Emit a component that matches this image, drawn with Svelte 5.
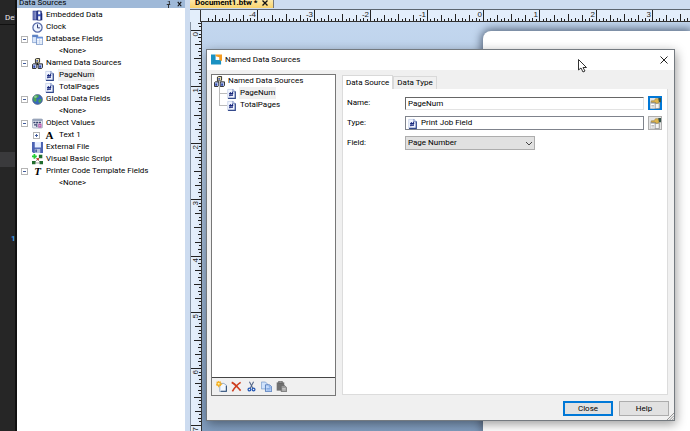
<script lang="ts">
  type Node = { label: string; icon: string; level: number; box?: string; selected?: boolean };

  const sources: Node[] = [
    { label: 'Embedded Data', icon: 'embedded', level: 0 },
    { label: 'Clock', icon: 'clock', level: 0 },
    { label: 'Database Fields', icon: 'database', level: 0, box: 'minus' },
    { label: '<None>', icon: '', level: 1 },
    { label: 'Named Data Sources', icon: 'named', level: 0, box: 'minus' },
    { label: 'PageNum', icon: 'field', level: 1, selected: true },
    { label: 'TotalPages', icon: 'field', level: 1 },
    { label: 'Global Data Fields', icon: 'globe', level: 0, box: 'minus' },
    { label: '<None>', icon: '', level: 1 },
    { label: 'Object Values', icon: 'object', level: 0, box: 'minus' },
    { label: 'Text 1', icon: 'text', level: 1, box: 'plus' },
    { label: 'External File', icon: 'file', level: 0 },
    { label: 'Visual Basic Script', icon: 'script', level: 0 },
    { label: 'Printer Code Template Fields', icon: 'printer', level: 0, box: 'minus' },
    { label: '<None>', icon: '', level: 1 }
  ];

  const tools = [
    { id: 'new', title: 'New' },
    { id: 'delete', title: 'Delete' },
    { id: 'cut', title: 'Cut' },
    { id: 'copy', title: 'Copy' },
    { id: 'paste', title: 'Paste' }
  ];

  // one inch on the rulers, in pixels
  const INCH = 56.4;

  function tickLength(i: number) {
    if (i % 16 === 0) return 12;
    if (i % 8 === 0) return 8;
    if (i % 4 === 0) return 7;
    if (i % 2 === 0) return 4;
    return 3;
  }

  function makeTicks(from: number, to: number, origin: number) {
    const ticks: { pos: number; len: number; label: string }[] = [];
    for (let i = Math.round(from * 16); i <= to * 16; i++) {
      ticks.push({
        pos: Math.round(origin + (i * INCH) / 16),
        len: tickLength(i),
        label: i % 16 === 0 ? String(i / 16) : ''
      });
    }
    return ticks;
  }

  const across = makeTicks(-4.9, 3.9, 282);
  const down = makeTicks(-0.1, 7, 8);

  let name = $state('PageNum');
  let field = $state('Page Number');
  let tab = $state('source');
</script>

{#snippet icon(id: string)}
  <svg class="icon" viewBox="0 0 16 16" aria-hidden="true">
    {#if id === 'embedded'}
      <path d="M1 1h9l5 4v10H1z" fill="#26358f" />
      <path d="M3 2v12M5.500 2v12" stroke="#e8ecff" stroke-width="1" />
      <path d="M7.500 1.500h6v13h-6z" fill="#3f55bd" stroke="#111b59" />
      <path d="M9 2h3v4H9zM9 9h3v5H9z" fill="#fff" />
    {:else if id === 'clock'}
      <circle cx="8" cy="8" r="6.700" fill="#eef4ff" stroke="#5468a8" stroke-width="1.800" />
      <path d="M8 3.500V8.500H11.500" fill="none" stroke="#27346e" stroke-width="1.400" />
    {:else if id === 'database'}
      <path d="M.5 1.500h8v11h-8z" fill="#d9e6fb" stroke="#7696c8" />
      <path d="M.5 1.500h8v3h-8z" fill="#5c80c4" />
      <path d="M6.500 4.500h9v11h-9z" fill="#fff" stroke="#4d74b6" />
      <path d="M6.500 4.500h9v2h-9z" fill="#5e8bdc" />
      <path d="M11 7v8M7 10h8M7 13h8" stroke="#b4cbed" />
    {:else if id === 'named'}
      <path d="M8 5v5M4 9h8" stroke="#222" stroke-width="1.500" />
      <path d="M5 1.500 6.500.7h4.500v5.500l-1.500 1H5z" fill="#e8dfae" stroke="#222" stroke-width="1.300" />
      <path d="M.7 9.500 2 8.500h5v5l-1.300 1.800h-5z" fill="#b9c8f0" stroke="#222" stroke-width="1.300" />
      <path d="M9 9.500l1.300-1h5v5L14 15.300H9z" fill="#b9c8f0" stroke="#222" stroke-width="1.300" />
      <path d="M6.500 3h2v2.500h-2zM2 11h2.500v3H2zM10.500 11H13v3h-2.500z" fill="#2b45ad" />
    {:else if id === 'field'}
      <path d="M2.500 2h8l3 3v10h-11z" fill="#f1f5ff" stroke="#b9c6e4" />
      <path d="M10 1.500v4h4" fill="#c9d5f2" stroke="#6678ac" />
      <path d="M13.500 5v10H3" fill="none" stroke="#344a8c" stroke-width="1.800" />
      <path d="M6.500 6 5.500 12M9.500 5.500 8.500 11.500M4.500 8h6M4.500 10.500h5.500" stroke="#17277c" stroke-width="1.500" />
    {:else if id === 'globe'}
      <circle cx="8" cy="8" r="7.200" fill="#3868bd" stroke="#56647b" />
      <path d="M2 5c2-4 6-4 8-3L9 5 6 6l1 3-2 3-3-3zM10 8l4-1c0 3-1 5-3 6l-2-2z" fill="#4aa453" />
      <circle cx="5" cy="4" r="2" fill="#b7e5c1" opacity=".6" />
    {:else if id === 'object'}
      <rect x=".5" y="1.500" width="15" height="13" rx="2" fill="#e4e8f1" stroke="#8b97ae" />
      <path d="M1 2h14v2H1z" fill="#7f8da9" />
      <path d="M2 6.500h12" stroke="#333e6b" stroke-width="2" stroke-dasharray="3 1" />
      <path d="M3 10h3M7 8v5" stroke="#333e6b" stroke-width="1.500" />
      <path d="M10 9v4h3V9z" fill="none" stroke="#b344a1" stroke-width="1.500" />
    {:else if id === 'file'}
      <path d="M0 0h16v16H2l-2-2z" fill="#4c63b3" />
      <path d="M4 0h9v8H4z" fill="#e7efff" />
      <path d="M4 10h8v6H4z" fill="#b9c4df" />
      <path d="M5 11h2v4H5z" fill="#34478e" />
    {:else if id === 'script'}
      <path d="m3 3 10 10M3 13 13 3M3 13h10" stroke="#777" />
      <path d="M3.500 0v7M0 3.500h7" stroke="#25d033" stroke-width="2.500" />
      <path d="M10 1h5v5h-5zM0 10h5v5H0zM11 10h5v5h-5z" fill="#206d2e" />
      <path d="M7 6h3v3H7z" fill="#c33f2e" />
    {:else if id === 'new'}
      <path d="M5.500 3.500h6l4 3v9h-10z" fill="#f3f8ff" stroke="#7390b4" />
      <path d="M15 7v8H7" fill="none" stroke="#25466f" stroke-width="1.500" />
      <path d="M4 0v9M0 4.500h9M1 1l6 6M7 1 1 7" stroke="#f6ac19" stroke-width="1.800" />
      <circle cx="4" cy="4" r="1.500" fill="#fff4a5" />
    {:else if id === 'delete'}
      <path d="M1 2c5 2 8 7 13 12M14 2C9 5 5 10 2 15" fill="none" stroke="#ce3c1c" stroke-width="2.400" />
    {:else if id === 'cut'}
      <path d="m5 1 5 10M11 1 6 11" stroke="#526688" stroke-width="1.500" />
      <circle cx="5" cy="12.500" r="2" fill="none" stroke="#2458b5" stroke-width="1.800" />
      <circle cx="11" cy="12.500" r="2" fill="none" stroke="#2458b5" stroke-width="1.800" />
    {:else if id === 'copy'}
      <path d="M.5 1.500h6l3 3v7h-9z" fill="#cfe2fb" stroke="#6d92c4" />
      <path d="M6.500 5.500h6l3 3v7h-9z" fill="#c3dafa" stroke="#315fa8" />
      <path d="M12 6v3h3M8 11h6M8 13h6" fill="none" stroke="#6592d7" />
    {:else if id === 'paste'}
      <path d="M1 2h11v12H1z" fill="#707070" />
      <path d="M4 0h5v3H4z" fill="#a9a9a9" stroke="#555" />
      <path d="M7.500 6.500h5l3 3v6h-8z" fill="#999" stroke="#666" />
      <path d="M9 11h5M9 13h5" stroke="#ddd" />
    {:else if id === 'properties'}
      <path d="M.5 5.500h9v10h-9z" fill="#fff" stroke="#bbb" />
      <path d="M7.500 7.500h6v8h-6z" fill="#f4f4f4" stroke="#777" />
      <path d="M1 6h8v2H1z" fill="#87909e" />
      <path d="M2 11h4M2 13h4" stroke="#999" />
      <path d="M2 4h4l2-3h5l1 5-4 2-3-2H2z" fill="#dfb64f" stroke="#8d7130" stroke-width=".7" />
      <path d="M12 0h4v6h-3z" fill="#35534b" />
    {/if}
  </svg>
{/snippet}

<div class="app">
  <aside class="backdrop">
    <span class="back-label">Del</span>
    <div class="back-row"></div>
    <span class="back-number">1</span>
  </aside>

  <section class="sources">
    <header class="sources-head">
      <span>Data Sources</span>
      <button class="plain" aria-label="Pin">
        <svg viewBox="0 0 6 8"><path d="M1 4h4M2 0h2v4M3 4v4" fill="none" stroke="#222" /></svg>
      </button>
      <button class="plain" aria-label="Close panel">
        <svg viewBox="0 0 6 8"><path d="m1 1 4 5M5 1 1 6" stroke="#111" stroke-width="1.300" /></svg>
      </button>
    </header>
    <ul class="tree">
      {#each sources as node}
        <li class="node" class:child={node.level === 1}>
          <span class="box-slot">
            {#if node.box}
              <button class="box" aria-label={node.box === 'plus' ? 'Expand' : 'Collapse'}>
                <svg viewBox="0 0 7 7">
                  <rect x=".5" y=".5" width="6" height="6" fill="#fff" stroke="#b4b4b4" />
                  <path d={node.box === 'plus' ? 'M2 3.500h3M3.500 2v3' : 'M2 3.500h3'} stroke="#425c9b" />
                </svg>
              </button>
            {/if}
          </span>
          <span class="icon-slot">
            {#if node.icon === 'text'}
              <span class="glyph">A</span>
            {:else if node.icon === 'printer'}
              <span class="glyph slanted">T</span>
            {:else if node.icon}
              {@render icon(node.icon)}
            {/if}
          </span>
          <span class="node-label" class:selected={node.selected}>{node.label}</span>
        </li>
      {/each}
    </ul>
  </section>

  <main class="workspace">
    <nav class="doc-tabs">
      <button class="doc-tab">
        Document1.btw *
        <svg viewBox="0 0 6 6" aria-hidden="true"><path d="m.5.5 5 5m0-5-5 5" stroke="#111" stroke-width="1.300" /></svg>
      </button>
    </nav>
    <div class="ruler-row">
      <div class="corner"></div>
      <svg class="ruler-x" aria-hidden="true">
        {#each across as t}
          <line x1={t.pos + 0.5} x2={t.pos + 0.5} y1={12 - t.len} y2="12" />
          {#if t.label}<text x={t.pos - 1} y="7" text-anchor="end">{t.label}</text>{/if}
        {/each}
      </svg>
    </div>
    <div class="stage">
      <svg class="ruler-y" aria-hidden="true">
        {#each down as t}
          <line x1={11 - t.len} x2="11" y1={t.pos + 0.5} y2={t.pos + 0.5} />
          {#if t.label}<text transform="translate(7 {t.pos + 2}) rotate(-90)" text-anchor="end">{t.label}</text>{/if}
        {/each}
      </svg>
      <div class="canvas"><div class="page"></div></div>
    </div>
  </main>

  <div class="dialog" role="dialog" aria-labelledby="dialog-title">
    <header class="titlebar">
      <svg class="logo" viewBox="0 0 12 11" aria-hidden="true">
        <path d="M0 0h5v6h6v5H0z" fill="#1a91c2" />
        <path d="M5 0h7v7L9 6V3L5 2z" fill="#f59b21" />
      </svg>
      <h1 id="dialog-title">Named Data Sources</h1>
      <button class="plain close-x" aria-label="Close">
        <svg viewBox="0 0 8 8"><path d="m.5.5 7 7m0-7-7 7" stroke="#222" /></svg>
      </button>
    </header>

    <div class="dialog-body">
      <div class="picker">
        <ul class="picker-tree">
          <li class="node">{@render icon('named')}<span class="node-label">Named Data Sources</span></li>
          <li class="node leaf">{@render icon('field')}<span class="node-label selected">PageNum</span></li>
          <li class="node leaf">{@render icon('field')}<span class="node-label">TotalPages</span></li>
        </ul>
        <div class="toolbar">
          {#each tools as tool}
            <button class="plain" aria-label={tool.title}>{@render icon(tool.id)}</button>
          {/each}
        </div>
      </div>

      <div class="editor">
        <div class="tabs" role="tablist">
          <button role="tab" class="tab" class:active={tab === 'source'} aria-selected={tab === 'source'} onclick={() => (tab = 'source')}>Data Source</button>
          <button role="tab" class="tab" class:active={tab === 'type'} aria-selected={tab === 'type'} onclick={() => (tab = 'type')}>Data Type</button>
        </div>
        <form class="form">
          <div class="form-row">
            <label for="name">Name:</label>
            <input id="name" class="name-input" type="text" bind:value={name} />
            <button type="button" class="props focused" aria-label="Name properties">{@render icon('properties')}</button>
          </div>
          <div class="form-row">
            <label for="type">Type:</label>
            <div class="type-box">
              {@render icon('field')}
              <input id="type" type="text" value="Print Job Field" readonly />
            </div>
            <button type="button" class="props" aria-label="Type properties">{@render icon('properties')}</button>
          </div>
          <div class="form-row">
            <label for="field">Field:</label>
            <div class="select-wrap">
              <select id="field" bind:value={field}>
                <option>Page Number</option>
              </select>
              <svg class="chevron" viewBox="0 0 8 5" aria-hidden="true"><path d="m1 1 3 3 3-3" fill="none" stroke="#444" /></svg>
            </div>
          </div>
        </form>
      </div>
    </div>

    <footer class="actions">
      <button class="action primary">Close</button>
      <button class="action">Help</button>
    </footer>
    <svg class="grip" viewBox="0 0 8 8" aria-hidden="true"><path d="M0 8 8 0M3 8l5-5M6 8l2-2" stroke="#888" /></svg>
  </div>

  <svg class="pointer" viewBox="0 0 9 14" aria-hidden="true">
    <path d="M.5.5v10.500l2.500-2 2 4 2-1-2-3.500h3.500z" fill="#fff" stroke="#333" />
  </svg>
</div>

<style>
  :global(body) { margin: 0; }
  * { box-sizing: border-box; }
  button, input, select { font: inherit; color: inherit; margin: 0; }
  ul { list-style: none; margin: 0; padding: 0; }
  svg { display: block; }

  .app {
    position: relative;
    display: flex;
    height: 100vh;
    overflow: hidden;
    font-family: Roboto, "Open Sans", sans-serif;
    font-size: 8px;
    line-height: 12px;
    color: #000;
    background: #cddcf0;
  }
  .plain { border: 0; padding: 0; background: none; }
  .icon { width: 11px; height: 11px; flex: none; }

  .backdrop {
    width: 17px;
    flex: none;
    padding-top: 12px;
    background: #262626;
    border-right: 2px solid #111;
    overflow: hidden;
    color: #eee;
  }
  .back-label { display: block; padding-left: 5px; border-bottom: 1px solid #111; }
  .back-row { height: 15px; margin-top: 127px; background: #3a3a3c; }
  .back-number { display: block; margin-top: 66px; padding-left: 11px; color: #3f9be8; font-weight: bold; }

  .sources { width: 168px; flex: none; background: #fff; }
  .sources-head {
    display: flex;
    align-items: center;
    gap: 4px;
    height: 8px;
    padding: 0 2px;
    background: #9fb9d8;
    line-height: 6px;
  }
  .sources-head span { flex: 1; margin-bottom: 2px; }
  .sources-head svg { width: 7px; height: 7px; }
  .tree { padding: 1px 0 0 4px; }
  .node { display: flex; align-items: center; height: 12px; white-space: nowrap; }
  .child { padding-left: 12px; }
  .box-slot { width: 11px; flex: none; }
  .box { display: block; padding: 0; border: 0; background: none; }
  .box svg { width: 7px; height: 7px; }
  .icon-slot { display: flex; justify-content: center; width: 11px; flex: none; }
  .glyph { font: bold 11px/12px "Liberation Serif", serif; }
  .slanted { font-style: italic; }
  .node-label { margin-left: 2px; padding: 0 1px; }
  .child .node-label { margin-left: 3px; }
  .selected { background: #f0f0f0; }

  .workspace { display: flex; flex-direction: column; flex: 1; min-width: 0; padding-left: 5px; }
  .doc-tabs { height: 9px; }
  .doc-tab {
    display: flex;
    align-items: center;
    gap: 5px;
    height: 8px;
    padding: 0 5px 2px;
    border: 0;
    border-right: 1px solid #777;
    background: linear-gradient(#fde9a8, #f8d36c);
    font-weight: bold;
    line-height: 6px;
  }
  .doc-tab svg { width: 6px; height: 6px; }
  .ruler-row { display: flex; height: 13px; border-top: 1px solid #5c6570; background: #e3eefb; }
  .corner { width: 11px; flex: none; border-right: 1px solid #333; }
  .ruler-x { flex: 1; min-width: 0; height: 12px; border-bottom: 1px solid #333; }
  .stage { display: flex; flex: 1; min-height: 0; }
  .ruler-y { width: 12px; flex: none; height: 100%; background: #e3eefb; border-right: 1px solid #333; border-left: 1px solid #8592a2; }
  line { stroke: #222; }
  text { font: 8px "Liberation Sans", sans-serif; fill: #222; }
  .canvas {
    flex: 1;
    min-width: 0;
    padding: 9px 0 0 281px;
    background: linear-gradient(#c3d7ef, #809cbe);
    overflow: hidden;
  }
  .page { height: 100%; background: #fff; border-radius: 8px 0 0 0; box-shadow: 0 0 9px 2px #58687e; }

  .dialog {
    position: absolute;
    top: 49px;
    left: 206px;
    right: 15px;
    display: flex;
    flex-direction: column;
    background: #f0f0f0;
    border: 1px solid #747a80;
    box-shadow: 1px 3px 10px rgba(0, 0, 0, 0.4);
  }
  .titlebar { display: flex; align-items: center; height: 20px; padding: 0 6px 1px 4px; background: #fff; }
  .logo { width: 11px; height: 11px; }
  h1 { flex: 1; margin: 0 0 0 3px; font-size: 8px; font-weight: normal; }
  .close-x svg { width: 8px; height: 8px; }

  .dialog-body { display: flex; gap: 6px; padding: 4px 6px 0 4px; }
  .picker { display: flex; flex-direction: column; width: 125px; height: 322px; flex: none; border: 1px solid #777; background: #fff; }
  .picker-tree { flex: 1; padding: 0 2px; }
  .leaf { position: relative; padding-left: 12px; }
  .leaf::before {
    content: "";
    position: absolute;
    left: 5px;
    top: -6px;
    width: 7px;
    height: 12px;
    border-left: 1px solid #bbb;
    border-bottom: 1px solid #bbb;
  }
  .toolbar { display: flex; align-items: center; gap: 4px; height: 18px; padding: 0 4px; border-top: 1px solid #444; background: #f0f0f0; }

  .editor { display: flex; flex-direction: column; flex: 1; min-width: 0; padding-bottom: 1px; }
  .tabs { display: flex; align-items: flex-end; height: 15px; }
  .tab { height: 13px; padding: 0 3px; border: 1px solid #d9d9d9; border-bottom: 0; background: #f0f0f0; line-height: 12px; }
  .tab.active { height: 14px; background: #fff; }
  .form { flex: 1; padding: 7px 5px 7px 4px; background: #fff; border: 1px solid #dcdcdc; border-top: 0; }
  .form-row { display: flex; align-items: center; height: 14px; margin-bottom: 6px; }
  .form-row label { width: 58px; flex: none; }
  .name-input {
    flex: 1;
    min-width: 0;
    height: 13px;
    padding: 0 2px;
    border: 1px solid #e3e3e3;
    border-top-color: #666;
    border-left-color: #666;
    outline: 0;
    background: #fff;
  }
  .type-box { display: flex; flex: 1; min-width: 0; align-items: center; gap: 3px; height: 14px; padding: 0 1px; border: 1px solid #7f838c; }
  .type-box input { flex: 1; min-width: 0; height: 12px; padding: 0; border: 0; outline: 0; background: none; }
  .props { display: flex; width: 14px; height: 14px; margin-left: 4px; padding: 0; align-items: center; justify-content: center; border: 1px solid #adadad; background: #e5e5e5; }
  .focused { border-color: #0078d7; box-shadow: 0 0 0 1px #0078d7 inset; }
  .select-wrap { position: relative; width: 130px; }
  select { appearance: none; display: block; width: 100%; height: 14px; padding: 0 2px; border: 1px solid #adadad; border-radius: 0; background: #e1e1e1; }
  .chevron { position: absolute; right: 2px; top: 5px; width: 8px; height: 5px; }

  .actions { display: flex; justify-content: flex-end; gap: 6px; padding: 5px 5px 4px; }
  .action { width: 50px; height: 15px; padding: 0; border: 1px solid #adadad; background: #e1e1e1; line-height: 12px; }
  .primary { border: 1px solid #0078d7; box-shadow: inset 0 0 0 1px #0078d7; }
  .grip { position: absolute; right: 0; bottom: 0; width: 7px; height: 7px; }
  .pointer { position: absolute; left: 578px; top: 59px; width: 9px; height: 14px; }
</style>
